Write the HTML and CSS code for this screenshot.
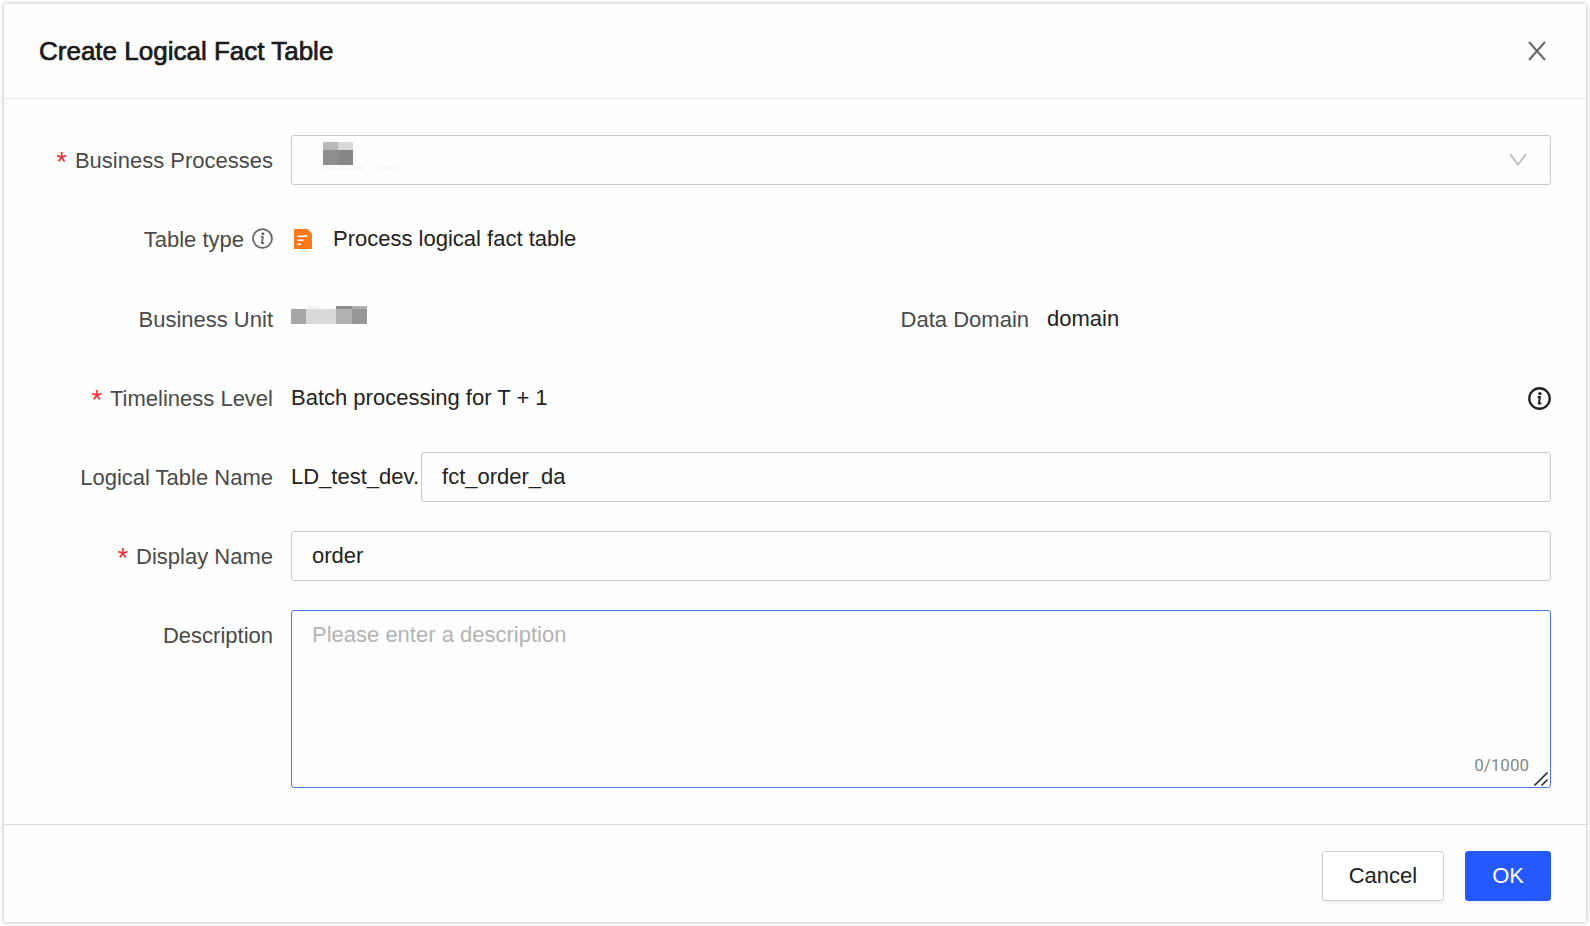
FILE: index.html
```html
<!DOCTYPE html>
<html lang="en">
<head>
  <meta charset="UTF-8">
  <title>Create Logical Fact Table</title>
  <link rel="stylesheet" href="styles.css">
</head>
<body>
  <form class="modal">
    <header class="modal-header">
      <h1>Create Logical Fact Table</h1>
      <button type="button" class="close" aria-label="Close">
        <svg width="18" height="20" viewBox="0 0 18 20">
          <path d="M1 1L17 19M17 1L1 19" fill="none" stroke="#666" stroke-width="2"/>
        </svg>
      </button>
    </header>

    <main class="modal-body">
      <div class="row">
        <label class="label required" for="process">Business Processes</label>
        <div class="select-box">
          <select id="process" class="control">
            <option value=""></option>
          </select>
          <svg class="masked-process" width="72" height="29" viewBox="0 0 72 29">
            <path fill="#b8b8b8" d="M0 0h15v8H0z"/>
            <path fill="#d8d8d8" d="M15 0h15v8H15z"/>
            <path fill="#8e8e8e" d="M0 8h15v15H0z"/>
            <path fill="#868686" d="M15 8h15v15H15z"/>
            <path fill="#fafafa" d="M0 23h43v6H0zM58 23h14v6H58z"/>
          </svg>
          <svg class="arrow" width="18" height="13" viewBox="0 0 18 13">
            <path d="M1 1L9 11.5L17 1" fill="none" stroke="#bfbfbf" stroke-width="2"/>
          </svg>
        </div>
      </div>

      <div class="row">
        <span class="label">Table type
          <svg class="info" width="21" height="21" viewBox="0 0 22 22">
            <circle cx="11" cy="11" r="9.9" fill="none" stroke="#666" stroke-width="1.9"/>
            <circle cx="11.4" cy="6" r="1.6" fill="#666"/>
            <path d="M9.2 9.3H11.4L10.4 15.8H12.8" fill="none" stroke="#666" stroke-width="1.9" stroke-linejoin="round"/>
          </svg>
        </span>
        <div class="value table-type">
          <svg width="18" height="20" viewBox="0 0 18 20">
            <path d="M0 0H13.5L18 4.5V20H0Z" fill="#ff7a17"/>
            <path d="M3.5 7.3H13M3.5 11.3H9.5M3.5 15.3H7" fill="none" stroke="#fff" stroke-width="1.4"/>
            <path d="M10.8 5.2L14 8H10.8Z" fill="#fff"/>
          </svg>
          Process logical fact table
        </div>
      </div>

      <div class="row-pair">
        <div class="row">
          <span class="label">Business Unit</span>
          <div class="value">
            <svg class="masked-unit" width="76" height="18" viewBox="0 0 76 18">
              <path fill="#a6a6a6" d="M0 3h15v15H0z"/>
              <path fill="#d9d9d9" d="M15 3h30v15H15z"/>
              <path fill="#f3f3f3" d="M15 0h15v3H15z"/>
              <path fill="#b0b0b0" d="M45 3h16v15H45zM61 0h15v3H61z"/>
              <path fill="#8e8e8e" d="M45 0h16v3H45z"/>
              <path fill="#979797" d="M61 3h15v15H61z"/>
            </svg>
          </div>
        </div>
        <div class="row">
          <span class="label">Data Domain</span>
          <div class="value">domain</div>
        </div>
      </div>

      <div class="row">
        <span class="label required">Timeliness Level</span>
        <div class="value timeliness">
          Batch processing for T + 1
          <svg width="23" height="23" viewBox="0 0 22 22">
            <circle cx="11" cy="11" r="9.8" fill="none" stroke="#222" stroke-width="2.2"/>
            <circle cx="11.4" cy="6.3" r="1.6" fill="#222"/>
            <path d="M9.2 9.5H11.4L10.4 15.8H12.8" fill="none" stroke="#222" stroke-width="2" stroke-linejoin="round"/>
          </svg>
        </div>
      </div>

      <div class="row">
        <label class="label" for="table-name">Logical Table Name</label>
        <div class="value table-name">
          <span>LD_test_dev.</span>
          <input type="text" id="table-name" class="control" value="fct_order_da">
        </div>
      </div>

      <div class="row">
        <label class="label required" for="display-name">Display Name</label>
        <input type="text" id="display-name" class="control" value="order">
      </div>

      <div class="row row-top">
        <label class="label" for="description">Description</label>
        <div class="textarea-box">
          <textarea id="description" class="control" maxlength="1000" placeholder="Please enter a description"></textarea>
          <span class="count">0/1000</span>
          <svg class="grip" width="14" height="14" viewBox="0 0 14 14">
            <path d="M0.5 13.5L13.5 0.5M7.5 13.5L13.5 7.5" fill="none" stroke="#333" stroke-width="1.6"/>
          </svg>
        </div>
      </div>
    </main>

    <footer class="modal-footer">
      <button type="button" class="btn">Cancel</button>
      <button type="submit" class="btn btn-primary">OK</button>
    </footer>
  </form>
</body>
</html>
```

FILE: styles.css
```css
* {
  box-sizing: border-box;
}
body {
  margin: 0;
  padding: 4px;
  background: #fff;
  font-family: "Liberation Sans", Arial, sans-serif;
  font-size: 22px;
  line-height: 30px;
  color: #222;
}
svg {
  display: block;
  flex: none;
}
.modal {
  background: #fefefe;
  box-shadow: 0 0 4px rgba(0, 0, 0, 0.35);
}

/* header */
.modal-header {
  display: flex;
  align-items: center;
  justify-content: space-between;
  height: 95px;
  padding: 0 35px;
  border-bottom: 1px solid #e8e8e8;
}
h1 {
  margin: 0;
  font-size: 26px;
  font-weight: normal;
  -webkit-text-stroke: 0.7px #1a1a1a;
  color: #1a1a1a;
}
.close {
  padding: 5px;
  border: none;
  background: none;
  cursor: pointer;
}

/* form rows */
.modal-body {
  display: flex;
  flex-direction: column;
  gap: 29px;
  padding: 36px 35px;
}
.row {
  display: grid;
  grid-template-columns: 234px 1fr;
  column-gap: 18px;
  align-items: center;
  min-height: 50px;
}
.row-top {
  align-items: start;
}
.row-pair {
  display: grid;
  grid-template-columns: 1fr 1fr;
  min-height: 51px;
}
.label {
  display: flex;
  align-items: center;
  justify-content: flex-end;
  gap: 8px;
  padding-top: 2px;
  color: #4a4a4a;
  white-space: nowrap;
}
.row-top .label {
  padding-top: 11px;
}
.required::before {
  content: "*";
  font-family: Roboto, sans-serif;
  font-size: 24px;
  color: #f5303d;
}
.info {
  margin-bottom: 4px;
}
.value {
  display: flex;
  align-items: center;
}
.table-type {
  gap: 21px;
  padding-left: 3px;
}
.timeliness {
  justify-content: space-between;
}
.table-name {
  gap: 2px;
}

/* controls */
.control {
  display: block;
  width: 100%;
  height: 50px;
  padding: 0 20px;
  border: 1px solid #c8c8cc;
  border-radius: 3px;
  background: transparent;
  font: inherit;
  color: #222;
  outline: none;
}
.select-box,
.textarea-box {
  position: relative;
}
select.control {
  appearance: none;
}
.masked-process {
  position: absolute;
  top: 7px;
  left: 32px;
  pointer-events: none;
}
.arrow {
  position: absolute;
  top: 18px;
  right: 24px;
  pointer-events: none;
}
.masked-unit {
  margin-bottom: 8px;
}
textarea.control {
  height: 178px;
  padding: 9px 20px;
  border-color: #4a7ae8;
  resize: none;
}
textarea::placeholder {
  color: #b3b3b3;
}
.count {
  position: absolute;
  right: 22px;
  bottom: 8px;
  font-family: "Liberation Sans Narrow", Roboto, sans-serif;
  font-size: 17px;
  color: #888;
}
.grip {
  position: absolute;
  right: 3px;
  bottom: 2px;
}

/* footer */
.modal-footer {
  display: flex;
  justify-content: flex-end;
  gap: 21px;
  padding: 26px 35px 21px;
  border-top: 1px solid #dcdcdc;
}
.btn {
  height: 50px;
  padding: 0 26px;
  border: 1px solid #ccc;
  border-radius: 3px;
  background: #fff;
  box-shadow: 0 3px 1px rgba(0, 0, 0, 0.04);
  font: inherit;
  color: #222;
  cursor: pointer;
}
.btn-primary {
  border-color: #2459ff;
  background: #2459ff;
  color: #fff;
}
```
